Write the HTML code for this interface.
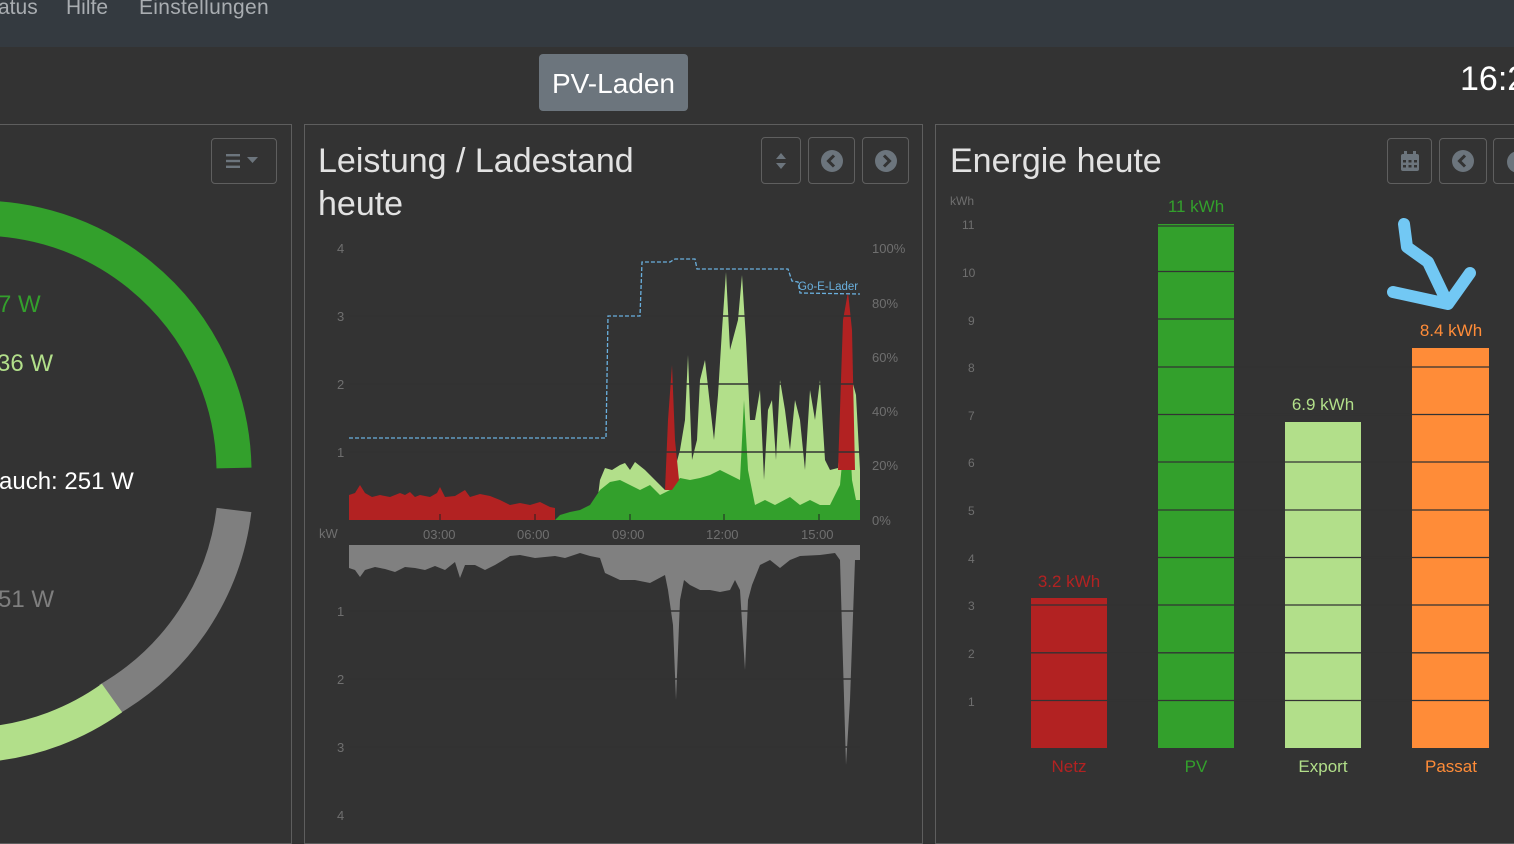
<!DOCTYPE html>
<html><head><meta charset="utf-8"><style>
body{margin:0;width:1514px;height:820px;background:#333;overflow:hidden;font-family:"Liberation Sans",sans-serif;position:relative}
.nav{position:absolute;left:0;top:0;width:1514px;height:47px;background:#343a40}
.abs{position:absolute;white-space:nowrap}
.panel{position:absolute;top:124px;height:720px;border:1px solid #5e5e5e;box-sizing:border-box}
.btn{position:absolute;border:1px solid #5f5f5f;border-radius:4px;box-sizing:border-box}
.ic{position:absolute;left:50%;top:50%;transform:translate(-50%,-50%)}
</style></head><body>
<div class="nav"></div>
<div class="abs" style="left:-2px;top:-4px;font-size:21px;color:#a9adb1">atus</div>
<div class="abs" style="left:66px;top:-4px;font-size:21px;color:#a9adb1">Hilfe</div>
<div class="abs" style="left:139px;top:-4px;font-size:21px;color:#a9adb1;letter-spacing:0.3px">Einstellungen</div>
<div class="abs" style="left:539px;top:54px;width:149px;height:57px;background:#6c757d;border-radius:4px;color:#fff;font-size:28px;line-height:60px;text-align:center">PV-Laden</div>
<div class="abs" style="left:1460px;top:60px;font-size:34px;color:#fff">16:2</div>

<div class="panel" style="left:-2px;width:294px"></div>
<div class="panel" style="left:304px;width:619px"></div>
<div class="panel" style="left:935px;width:600px"></div>

<div class="btn" style="left:211px;top:138px;width:66px;height:46px">
<svg class="ic" width="40" height="20" viewBox="0 0 40 20"><rect x="2" y="3" width="14" height="2.4" fill="#6c757d"/><rect x="2" y="8.8" width="14" height="2.4" fill="#6c757d"/><rect x="2" y="14.6" width="14" height="2.4" fill="#6c757d"/><path d="M23 6h11l-5.5 6z" fill="#6c757d"/></svg></div>

<div class="abs" style="left:318px;top:140px;font-size:34px;line-height:43px;color:#e2e2e2">Leistung / Ladestand<br>heute</div>
<div class="btn" style="left:761px;top:137px;width:40px;height:47px"><svg class="ic" width="14" height="22" viewBox="0 0 14 22"><path d="M2 9h10L7 3zM2 13h10l-5 6z" fill="#6c757d"/></svg></div>
<div class="btn" style="left:808px;top:137px;width:47px;height:47px"><svg class="ic" width="24" height="24" viewBox="0 0 24 24"><circle cx="12" cy="12" r="11" fill="#6c757d"/><path d="M14 6.5L8.5 12 14 17.5" stroke="#333" stroke-width="3" fill="none"/></svg></div>
<div class="btn" style="left:862px;top:137px;width:47px;height:47px"><svg class="ic" width="24" height="24" viewBox="0 0 24 24"><circle cx="12" cy="12" r="11" fill="#6c757d"/><path d="M10 6.5L15.5 12 10 17.5" stroke="#333" stroke-width="3" fill="none"/></svg></div>

<div class="abs" style="left:950px;top:142px;font-size:34px;color:#e2e2e2">Energie heute</div>
<div class="btn" style="left:1387px;top:138px;width:45px;height:46px"><svg class="ic" width="20" height="22" viewBox="0 0 20 22"><rect x="1" y="4" width="18" height="17" rx="2" fill="#6c757d"/><rect x="4" y="1" width="3" height="5" fill="#6c757d"/><rect x="13" y="1" width="3" height="5" fill="#6c757d"/><g fill="#333"><rect x="3" y="10" width="3" height="2.5"/><rect x="8.5" y="10" width="3" height="2.5"/><rect x="14" y="10" width="3" height="2.5"/><rect x="3" y="15" width="3" height="2.5"/><rect x="8.5" y="15" width="3" height="2.5"/><rect x="14" y="15" width="3" height="2.5"/></g></svg></div>
<div class="btn" style="left:1439px;top:138px;width:48px;height:46px"><svg class="ic" width="24" height="24" viewBox="0 0 24 24"><circle cx="12" cy="12" r="11" fill="#6c757d"/><path d="M14 6.5L8.5 12 14 17.5" stroke="#333" stroke-width="3" fill="none"/></svg></div>
<div class="btn" style="left:1493px;top:138px;width:48px;height:46px"><svg style="position:absolute;left:12px;top:11px" width="24" height="24" viewBox="0 0 24 24"><circle cx="12" cy="12" r="11" fill="#6c757d"/></svg></div>

<svg class="abs" style="left:0;top:0" width="1514" height="820" viewBox="0 0 1514 820" font-family="Liberation Sans, sans-serif">
<g fill="none" stroke-width="35">
<path d="M-67.2 222.5 A254.5 254.5 0 0 1 234 468" stroke="#33a02c"/>
<path d="M234 510 A254.5 254.5 0 0 1 108 700" stroke="#7f7f7f"/>
<path d="M112 698 A254.5 254.5 0 0 1 -10 744" stroke="#b2df8a"/>
</g>
<g font-size="24">
<text x="-2" y="312" fill="#33a02c">7 W</text>
<text x="-3" y="371" fill="#b2df8a">36 W</text>
<text x="-1" y="489" fill="#fff">auch: 251 W</text>
<text x="-2" y="607" fill="#7f7f7f">51 W</text>
</g>
<g font-size="13" fill="#6f6f6f">
<text x="337" y="253">4</text><text x="337" y="321">3</text><text x="337" y="389">2</text><text x="337" y="457">1</text>
<text x="319" y="538">kW</text>
<text x="337" y="616">1</text><text x="337" y="684">2</text><text x="337" y="752">3</text><text x="337" y="820">4</text>
<text x="872" y="253">100%</text><text x="872" y="308">80%</text><text x="872" y="362">60%</text><text x="872" y="416">40%</text><text x="872" y="470">20%</text><text x="872" y="525">0%</text>
<text x="423" y="539">03:00</text><text x="517" y="539">06:00</text><text x="612" y="539">09:00</text><text x="706" y="539">12:00</text><text x="801" y="539">15:00</text>
</g>
<path fill="#b2df8a" d="M595,520 600,480 605,468 612,470 620,465 625,463 630,470 635,462 640,466 645,470 650,475 655,480 660,485 665,490 672,480 680,450 685,420 688,355 692,460 697,440 700,380 705,360 710,405 714,440 718,395 722,330 726,272 730,350 734,335 738,320 742,275 746,340 750,420 755,420 760,390 764,480 768,410 772,400 776,460 780,380 785,410 790,450 795,400 800,420 805,470 810,390 815,420 820,380 825,460 830,470 838,468 842,420 848,300 852,380 856,395 860,470 860,520Z"/>
<path fill="#33a02c" d="M555,520 560,515 570,512 580,510 590,505 600,490 610,482 620,480 630,485 640,490 650,485 660,495 670,490 680,478 690,480 700,478 710,475 720,470 730,475 740,480 744,400 748,470 755,505 765,500 775,505 790,497 800,505 810,500 820,505 830,505 840,485 848,400 852,480 856,500 860,500 860,520Z"/>
<path fill="#b22222" d="M349,520 349,495 355,493 360,485 365,493 372,497 380,495 390,497 400,493 405,495 410,492 415,497 420,495 430,497 437,493 440,487 445,497 455,496 465,490 470,497 480,494 490,496 500,500 510,505 520,503 530,505 540,502 550,507 555,508 555,520Z M665,490 668,420 672,365 675,440 679,480 672,490Z M838,470 843,320 848,292 852,330 855,470Z"/>
<path fill="#808080" d="M349,545 349,568 355,570 360,577 365,570 375,567 385,569 395,572 405,567 415,568 425,570 435,566 445,570 455,562 460,578 465,565 475,565 485,570 495,565 510,556 520,555 535,558 555,556 565,558 580,553 590,556 600,558 605,573 620,580 635,580 650,583 665,575 668,590 673,625 676,700 680,600 684,580 690,585 700,590 710,590 720,592 730,590 735,580 740,590 745,670 748,600 752,585 760,565 770,560 780,568 790,560 800,556 820,555 835,553 840,560 846,765 850,700 855,560 860,560 860,545Z"/>
<g stroke="#333" stroke-width="1.5">
<line x1="349" y1="452" x2="860" y2="452"/><line x1="349" y1="384" x2="860" y2="384"/><line x1="349" y1="316" x2="860" y2="316"/>
<line x1="349" y1="611" x2="860" y2="611"/><line x1="349" y1="679" x2="860" y2="679"/><line x1="349" y1="747" x2="860" y2="747"/>
</g>
<g stroke="#222" stroke-width="1"><line x1="440" y1="514" x2="440" y2="520"/><line x1="535" y1="514" x2="535" y2="520"/><line x1="630" y1="514" x2="630" y2="520"/><line x1="724" y1="514" x2="724" y2="520"/><line x1="819" y1="514" x2="819" y2="520"/></g>
<path d="M349,438 606,438 608,316 640,316 642,262 670,262 675,259 695,259 697,269 788,269 792,281 798,282 800,293 860,294" fill="none" stroke="#6ab0de" stroke-width="1.3" stroke-dasharray="4,2"/>
<text x="798" y="290" font-size="11.5" fill="#6ab0de">Go-E-Lader</text>
<g font-size="12" fill="#6f6f6f">
<text x="950" y="205">kWh</text>
<text x="962" y="229">11</text><text x="962" y="277">10</text><text x="968" y="325">9</text><text x="968" y="372">8</text><text x="968" y="420">7</text><text x="968" y="467">6</text><text x="968" y="515">5</text><text x="968" y="563">4</text><text x="968" y="610">3</text><text x="968" y="658">2</text><text x="968" y="706">1</text>
</g>
<rect x="1031" y="598" width="76" height="150" fill="#b22222"/>
<rect x="1158" y="224" width="76" height="524" fill="#33a02c"/>
<rect x="1285" y="422" width="76" height="326" fill="#b2df8a"/>
<rect x="1412" y="348" width="77" height="400" fill="#ff8c38"/>
<g stroke="#333" stroke-width="1.3">
<line x1="1031" x2="1489" y1="700.5" y2="700.5"/><line x1="1031" x2="1489" y1="652.8" y2="652.8"/><line x1="1031" x2="1489" y1="605" y2="605"/><line x1="1158" x2="1489" y1="557.5" y2="557.5"/><line x1="1158" x2="1489" y1="510" y2="510"/><line x1="1158" x2="1489" y1="462" y2="462"/><line x1="1158" x2="1489" y1="414.5" y2="414.5"/><line x1="1158" x2="1489" y1="367" y2="367"/><line x1="1158" x2="1234" y1="319" y2="319"/><line x1="1158" x2="1234" y1="271.5" y2="271.5"/><line x1="1158" x2="1234" y1="226" y2="226"/>
</g>
<g font-size="17" text-anchor="middle">
<text x="1069" y="587" fill="#b22222">3.2 kWh</text><text x="1069" y="772" fill="#b22222">Netz</text>
<text x="1196" y="212" fill="#33a02c">11 kWh</text><text x="1196" y="772" fill="#33a02c">PV</text>
<text x="1323" y="410" fill="#b2df8a">6.9 kWh</text><text x="1323" y="772" fill="#b2df8a">Export</text>
<text x="1451" y="336" fill="#ff8c38">8.4 kWh</text><text x="1451" y="772" fill="#ff8c38">Passat</text>
</g>
<path d="M1404,224 L1407,247 L1428,262 L1448,304 L1470,273 M1393,292 L1448,304" fill="none" stroke="#72c8f4" stroke-width="12" stroke-linecap="round" stroke-linejoin="round"/>
</svg>
</body></html>
